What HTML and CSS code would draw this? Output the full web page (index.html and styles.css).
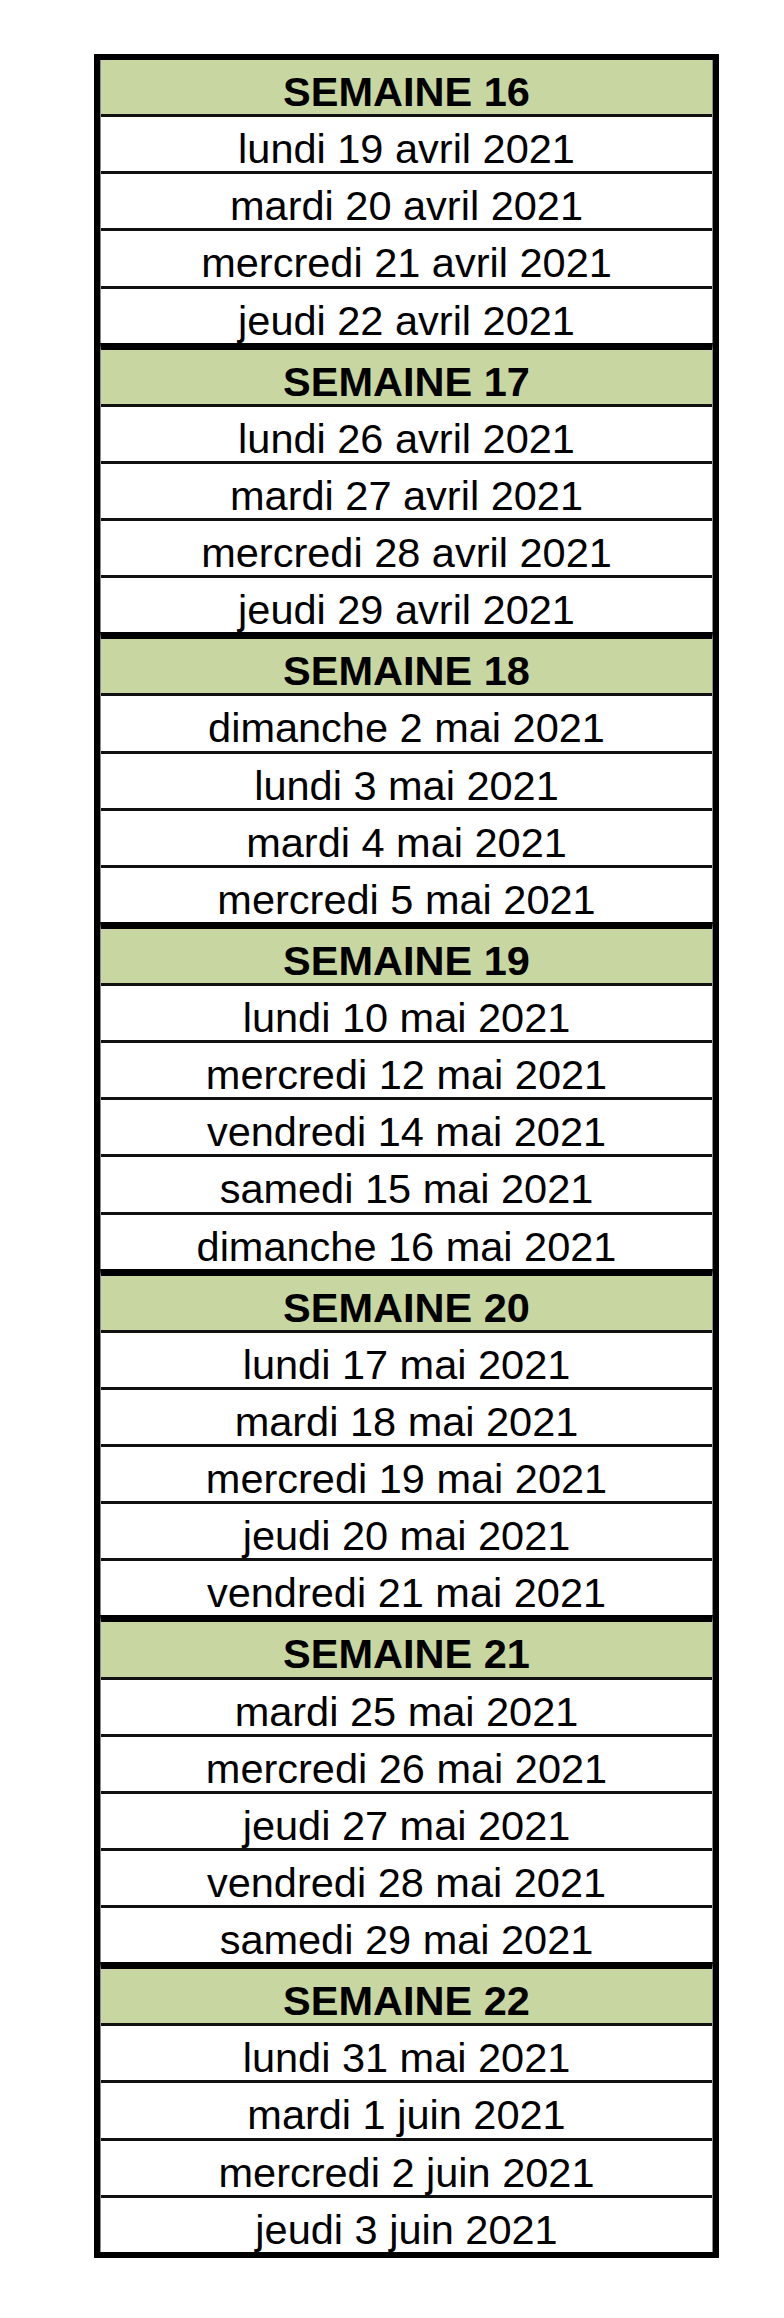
FILE: index.html
```html
<!DOCTYPE html>
<html lang="fr">
<head>
<meta charset="utf-8">
<title>Semaines</title>
<link rel="stylesheet" href="styles.css">
</head>
<body>
<div class="sheet">
  <section class="week">
    <div class="row head">SEMAINE 16</div>
    <div class="row">lundi 19 avril 2021</div>
    <div class="row">mardi 20 avril 2021</div>
    <div class="row">mercredi 21 avril 2021</div>
    <div class="row">jeudi 22 avril 2021</div>
  </section>
  <section class="week">
    <div class="row head">SEMAINE 17</div>
    <div class="row">lundi 26 avril 2021</div>
    <div class="row">mardi 27 avril 2021</div>
    <div class="row">mercredi 28 avril 2021</div>
    <div class="row">jeudi 29 avril 2021</div>
  </section>
  <section class="week">
    <div class="row head">SEMAINE 18</div>
    <div class="row">dimanche 2 mai 2021</div>
    <div class="row">lundi 3 mai 2021</div>
    <div class="row">mardi 4 mai 2021</div>
    <div class="row">mercredi 5 mai 2021</div>
  </section>
  <section class="week">
    <div class="row head">SEMAINE 19</div>
    <div class="row">lundi 10 mai 2021</div>
    <div class="row">mercredi 12 mai 2021</div>
    <div class="row">vendredi 14 mai 2021</div>
    <div class="row">samedi 15 mai 2021</div>
    <div class="row">dimanche 16 mai 2021</div>
  </section>
  <section class="week">
    <div class="row head">SEMAINE 20</div>
    <div class="row">lundi 17 mai 2021</div>
    <div class="row">mardi 18 mai 2021</div>
    <div class="row">mercredi 19 mai 2021</div>
    <div class="row">jeudi 20 mai 2021</div>
    <div class="row">vendredi 21 mai 2021</div>
  </section>
  <section class="week">
    <div class="row head">SEMAINE 21</div>
    <div class="row">mardi 25 mai 2021</div>
    <div class="row">mercredi 26 mai 2021</div>
    <div class="row">jeudi 27 mai 2021</div>
    <div class="row">vendredi 28 mai 2021</div>
    <div class="row">samedi 29 mai 2021</div>
  </section>
  <section class="week">
    <div class="row head">SEMAINE 22</div>
    <div class="row">lundi 31 mai 2021</div>
    <div class="row">mardi 1 juin 2021</div>
    <div class="row">mercredi 2 juin 2021</div>
    <div class="row">jeudi 3 juin 2021</div>
  </section>
</div>
</body>
</html>
```
FILE: styles.css
```css
html, body {
  margin: 0;
  padding: 0;
  background: #ffffff;
}

body {
  font-family: "Liberation Sans", Arial, sans-serif;
  color: #000;
}

.sheet {
  margin: 54px 0 0 94px;
  width: 625px;
  box-sizing: border-box;
  border: 6px solid #000;
  display: flex;
  flex-direction: column;
}

.week {
  display: flex;
  flex-direction: column;
  border-left: 1px solid #8c8c8c;
  border-right: 1px solid #8c8c8c;
}

.week + .week {
  border-top: 7px solid #000;
}

.row {
  height: 54.13px;
  line-height: 63px;
  font-size: 41.5px;
  text-align: center;
  white-space: nowrap;
  background: #fff;
}

.row + .row {
  border-top: 3px solid #111;
}

.head {
  background: #c8d6a2;
  font-weight: bold;
}
```
